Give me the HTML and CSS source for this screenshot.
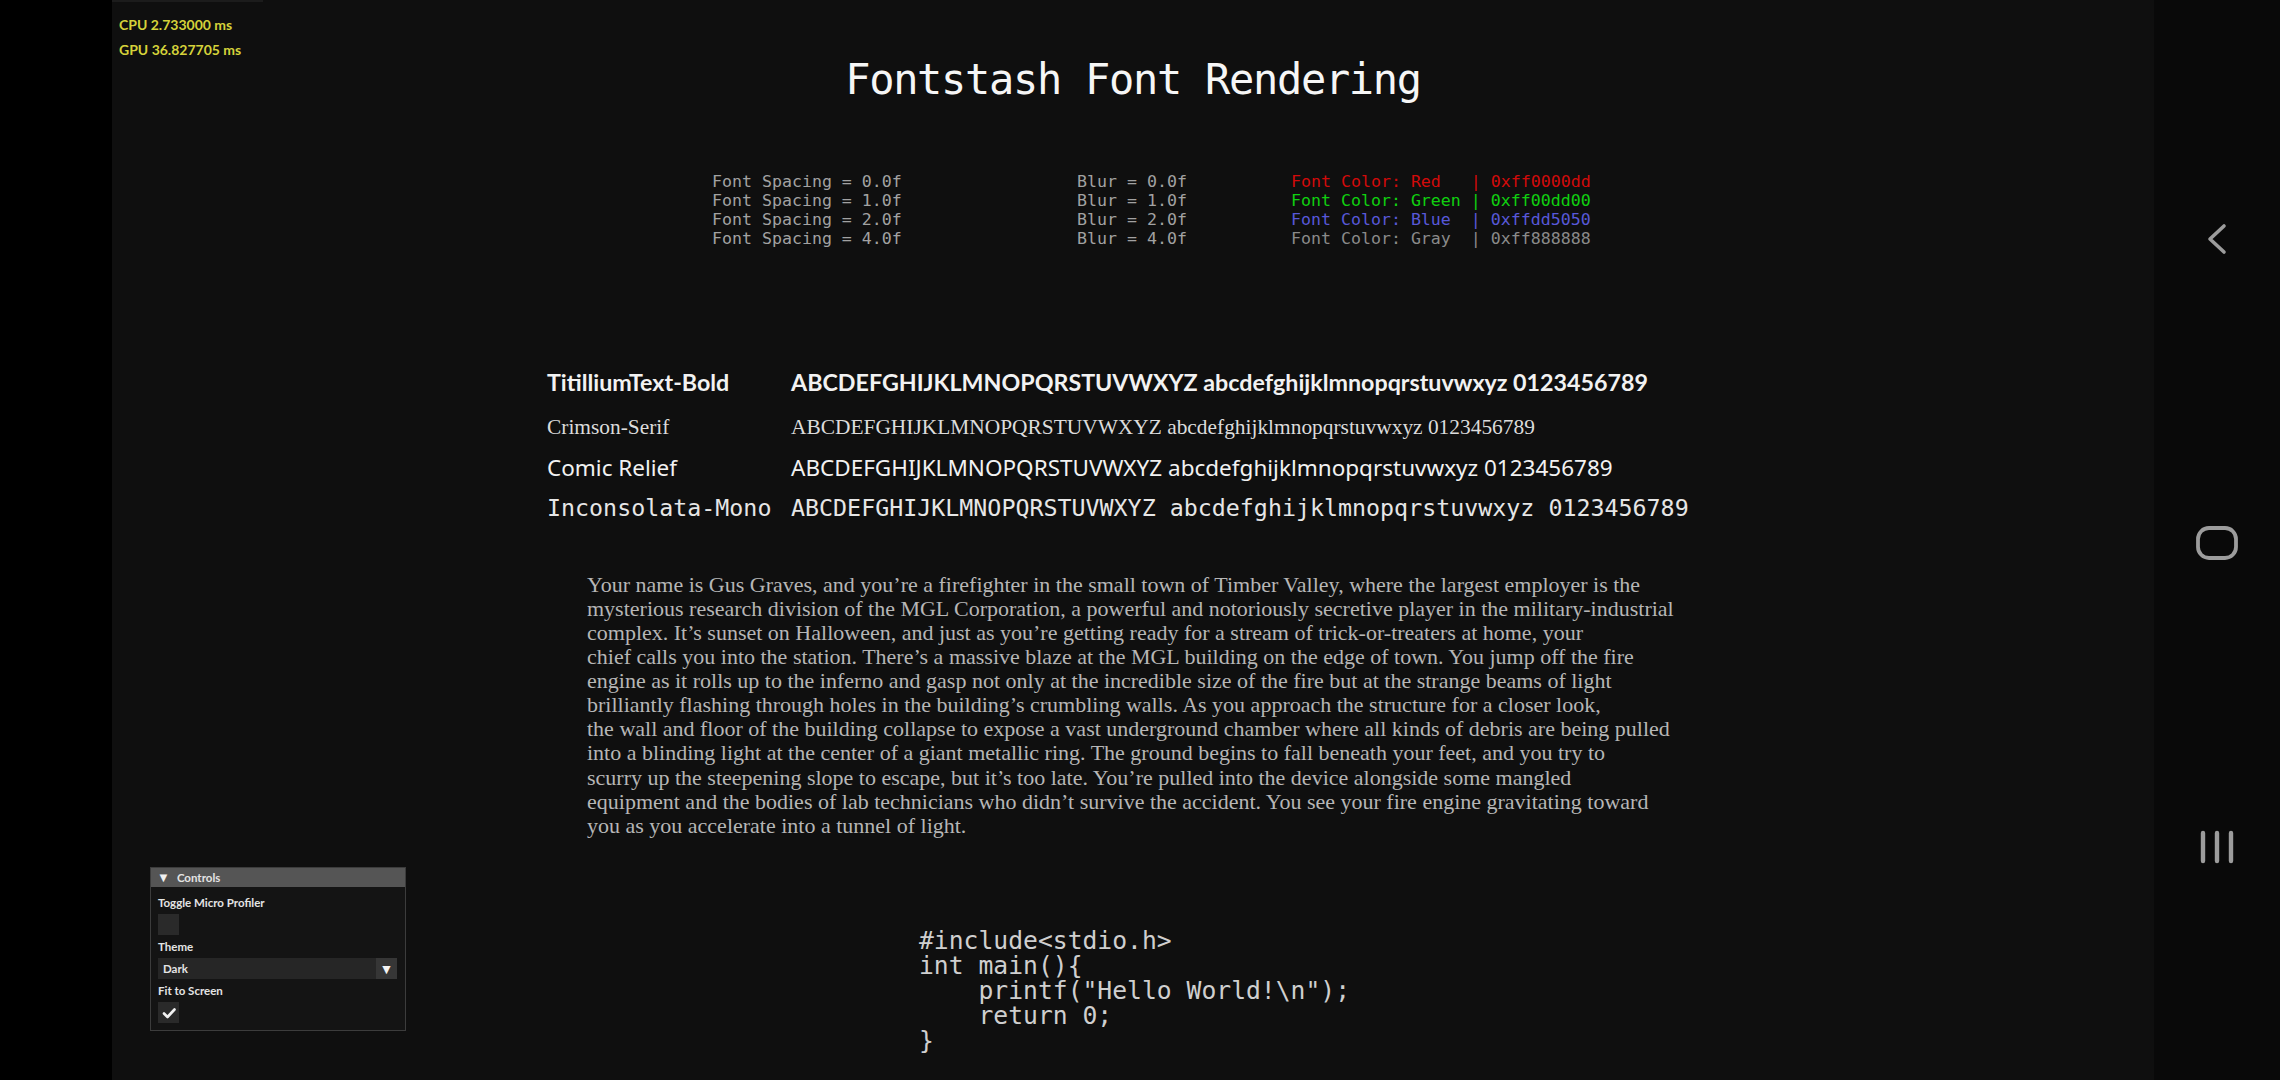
FILE: index.html
```html
<!DOCTYPE html>
<html>
<head>
<meta charset="utf-8">
<title>Fontstash Font Rendering</title>
<link rel="stylesheet" href="styles.css">
</head>
<body>
<div class="screen">
  <div class="cutout"></div>
  <main class="app">
    <div class="profiler">
      <div>CPU 2.733000 ms</div>
      <div>GPU 36.827705 ms</div>
    </div>

    <h1 class="title">Fontstash Font Rendering</h1>

    <div class="spacing">
      <div class="col c1">
        <div>Font Spacing = 0.0f</div>
        <div>Font Spacing = 1.0f</div>
        <div>Font Spacing = 2.0f</div>
        <div>Font Spacing = 4.0f</div>
      </div>
      <div class="col c2">
        <div>Blur = 0.0f</div>
        <div>Blur = 1.0f</div>
        <div>Blur = 2.0f</div>
        <div>Blur = 4.0f</div>
      </div>
      <div class="col c3">
        <div class="red">Font Color: Red   | 0xff0000dd</div>
        <div class="green">Font Color: Green | 0xff00dd00</div>
        <div class="blue">Font Color: Blue  | 0xffdd5050</div>
        <div class="gray">Font Color: Gray  | 0xff888888</div>
      </div>
    </div>

    <div class="samples">
      <div class="s-label f-tit">TitilliumText-Bold</div>
      <div class="s-text f-tit">ABCDEFGHIJKLMNOPQRSTUVWXYZ abcdefghijklmnopqrstuvwxyz 0123456789</div>
      <div class="s-label f-crim">Crimson-Serif</div>
      <div class="s-text f-crim">ABCDEFGHIJKLMNOPQRSTUVWXYZ abcdefghijklmnopqrstuvwxyz 0123456789</div>
      <div class="s-label f-comic">Comic Relief</div>
      <div class="s-text f-comic">ABCDEFGHIJKLMNOPQRSTUVWXYZ abcdefghijklmnopqrstuvwxyz 0123456789</div>
      <div class="s-label f-mono">Inconsolata-Mono</div>
      <div class="s-text f-mono">ABCDEFGHIJKLMNOPQRSTUVWXYZ abcdefghijklmnopqrstuvwxyz 0123456789</div>
    </div>

    <div class="story">
      <div>Your name is Gus Graves, and you’re a firefighter in the small town of Timber Valley, where the largest employer is the</div>
      <div>mysterious research division of the MGL Corporation, a powerful and notoriously secretive player in the military-industrial</div>
      <div>complex. It’s sunset on Halloween, and just as you’re getting ready for a stream of trick-or-treaters at home, your</div>
      <div>chief calls you into the station. There’s a massive blaze at the MGL building on the edge of town. You jump off the fire</div>
      <div>engine as it rolls up to the inferno and gasp not only at the incredible size of the fire but at the strange beams of light</div>
      <div>brilliantly flashing through holes in the building’s crumbling walls. As you approach the structure for a closer look,</div>
      <div>the wall and floor of the building collapse to expose a vast underground chamber where all kinds of debris are being pulled</div>
      <div>into a blinding light at the center of a giant metallic ring. The ground begins to fall beneath your feet, and you try to</div>
      <div>scurry up the steepening slope to escape, but it’s too late. You’re pulled into the device alongside some mangled</div>
      <div>equipment and the bodies of lab technicians who didn’t survive the accident. You see your fire engine gravitating toward</div>
      <div>you as you accelerate into a tunnel of light.</div>
    </div>

    <pre class="code">#include&lt;stdio.h&gt;
int main(){
    printf("Hello World!\n");
    return 0;
}</pre>

    <div class="controls">
      <div class="ctl-head"><span class="tri">&#9660;</span>Controls</div>
      <div class="ctl-body">
        <div class="ctl-label">Toggle Micro Profiler</div>
        <div class="check"></div>
        <div class="ctl-label">Theme</div>
        <div class="combo"><span class="combo-val">Dark</span><span class="combo-btn">&#9660;</span></div>
        <div class="ctl-label">Fit to Screen</div>
        <div class="check">
          <svg viewBox="0 0 20 20" width="20" height="20"><path d="M5 10.5 L8.5 14 L15.5 6.5" fill="none" stroke="#f2f2f2" stroke-width="2.6" stroke-linecap="round" stroke-linejoin="round"/></svg>
        </div>
      </div>
    </div>
  </main>
  <nav class="navbar">
    <svg class="nav-back" viewBox="0 0 24 40" width="24" height="40"><path d="M19 7 L5 20 L19 33" fill="none" stroke="#9c9c9c" stroke-width="3.6" stroke-linecap="round" stroke-linejoin="round"/></svg>
    <svg class="nav-home" viewBox="0 0 44 40" width="44" height="40"><rect x="3" y="5" width="38" height="30" rx="11" ry="11" fill="none" stroke="#9c9c9c" stroke-width="3.8"/></svg>
    <svg class="nav-recent" viewBox="0 0 40 40" width="40" height="40"><g stroke="#9c9c9c" stroke-width="4.4" stroke-linecap="round"><path d="M6 6 V34"/><path d="M20 6 V34"/><path d="M34 6 V34"/></g></svg>
  </nav>
</div>
</body>
</html>
```

FILE: styles.css
```css
html, body {
  margin: 0;
  padding: 0;
  background: #000;
}
.screen {
  width: 2280px;
  height: 1080px;
  display: flex;
  overflow: hidden;
}
.cutout {
  width: 112px;
  flex: 0 0 112px;
  background: #000;
}
.app {
  position: relative;
  flex: 0 0 2042px;
  width: 2042px;
  height: 1080px;
  background: #0f0f0f;
  overflow: hidden;
}
.navbar {
  flex: 0 0 126px;
  background: #090909;
  display: flex;
  flex-direction: column;
  align-items: center;
  justify-content: center;
  gap: 264px;
  padding-top: 6px;
  box-sizing: border-box;
}
.navbar svg { display: block; }

/* profiler overlay */
.profiler {
  position: absolute;
  left: 0;
  top: 0;
  width: 151px;
  height: 64px;
  border-top: 2px solid #1c1c1c;
  box-sizing: border-box;
  padding: 10px 0 0 7px;
  font-family: Lato, "Open Sans", sans-serif;
  font-weight: 700;
  font-size: 14px;
  line-height: 25px;
  color: #d5d23a;
}

.title {
  margin: 55px 0 0 0;
  text-align: center;
  font-family: "DejaVu Sans Mono", monospace;
  font-weight: 400;
  font-size: 42px;
  line-height: 50px;
  letter-spacing: -1.3px;
  color: #f6f6f6;
}

.spacing {
  display: flex;
  margin: 67px 0 0 600px;
  font-family: "DejaVu Sans Mono", monospace;
  font-size: 16.6px;
  line-height: 19px;
  color: #a2a2a2;
}
.col > div { white-space: pre; }
.c1 { width: 365px; }
.c2 { width: 214px; }
.red { color: #d20a0a; }
.green { color: #10d010; }
.blue { color: #5858d8; }
.gray { color: #8a8a8a; }

.samples {
  display: grid;
  grid-template-columns: 244px auto;
  grid-template-rows: 51px 40px 40px 40px;
  margin: 108px 0 0 435px;
  color: #f2f2f2;
  white-space: nowrap;
}
.s-label, .s-text {
  display: flex;
  align-items: center;
}
.f-tit {
  font-family: Lato, sans-serif;
  font-weight: 700;
  font-size: 23.25px;
}
.f-crim {
  font-family: "Liberation Serif", serif;
  font-size: 21.4px;
  color: #dcdcdc;
}
.f-comic {
  font-family: "Noto Sans", sans-serif;
  font-size: 22.5px;
}
.f-mono {
  font-family: "DejaVu Sans Mono", monospace;
  font-size: 23.3px;
  color: #e6e6e6;
}

.story {
  margin: 46px 0 0 475px;
  font-family: "Liberation Serif", serif;
  font-size: 22px;
  line-height: 24.07px;
  color: #b6b6b6;
  white-space: nowrap;
}

.code {
  margin: 90px 0 0 807px;
  font-family: "DejaVu Sans Mono", monospace;
  font-size: 24.7px;
  line-height: 25px;
  color: #cfcfcf;
}

/* ImGui-like controls window */
.controls {
  position: absolute;
  left: 38px;
  top: 867px;
  width: 256px;
  box-sizing: border-box;
  border: 1px solid #3c3c3c;
  background: #141414;
  font-family: Lato, "Open Sans", sans-serif;
  font-weight: 700;
  font-size: 11.5px;
  color: #e4e4e4;
}
.ctl-head {
  height: 19px;
  line-height: 19px;
  background: #555555;
  padding-left: 6px;
  display: flex;
  align-items: center;
}
.tri {
  font-size: 13px;
  margin-right: 7px;
  color: #f0f0f0;
}
.ctl-body {
  padding: 8px 8px 7px 7px;
  display: flex;
  flex-direction: column;
  align-items: flex-start;
}
.ctl-label {
  height: 16px;
  line-height: 16px;
  margin-bottom: 3px;
}
.check {
  width: 21px;
  height: 21px;
  background: #2a2a2a;
  margin-bottom: 4px;
  display: flex;
  align-items: center;
  justify-content: center;
}
.check:last-child { margin-bottom: 0; }
.combo {
  align-self: stretch;
  height: 21px;
  background: #262626;
  display: flex;
  align-items: center;
  justify-content: space-between;
  margin-bottom: 4px;
}
.combo-val { padding-left: 5px; }
.combo-btn {
  width: 21px;
  height: 21px;
  background: #363636;
  display: flex;
  align-items: center;
  justify-content: center;
  font-size: 14px;
  color: #f4f4f4;
}
```
